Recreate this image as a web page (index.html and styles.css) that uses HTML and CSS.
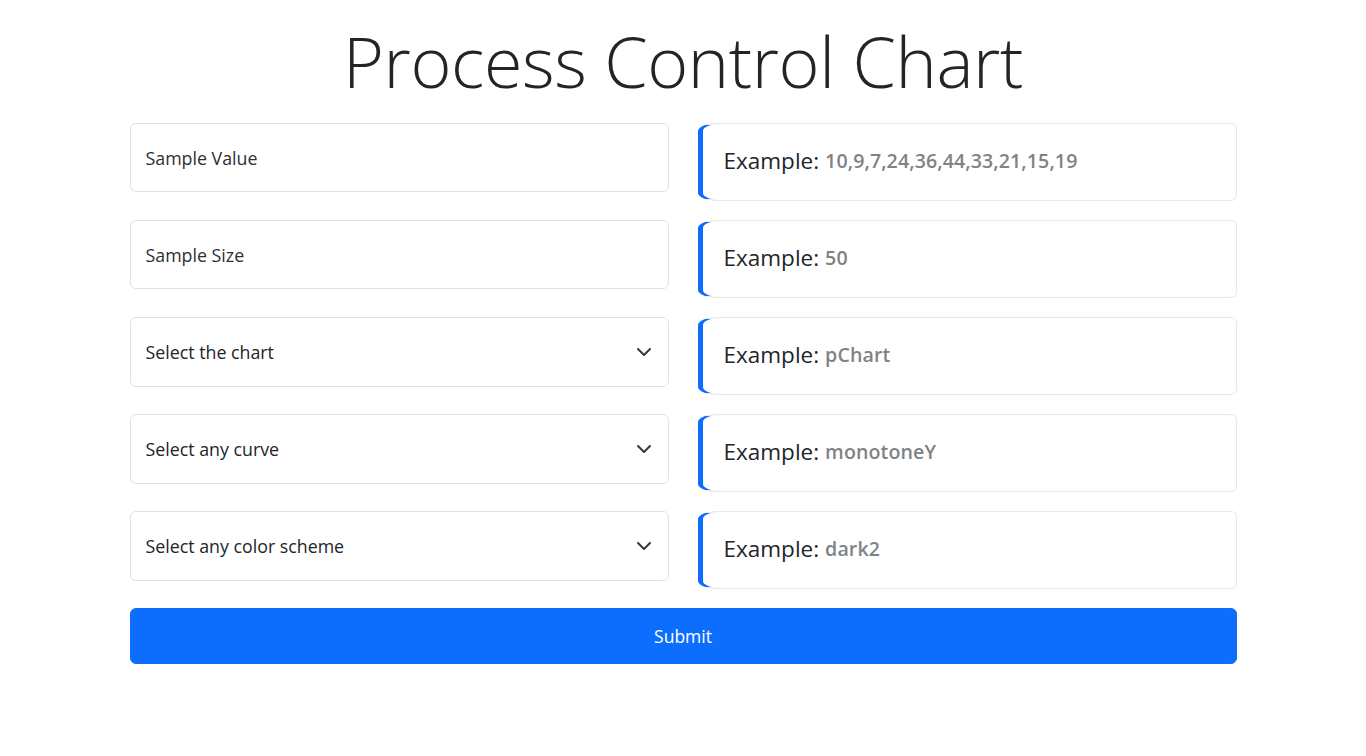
FILE: index.html
```html
<!DOCTYPE html>
<html lang="en">
<head>
<meta charset="utf-8">
<title>Process Control Chart</title>
<link rel="stylesheet" href="styles.css">
</head>
<body>
<main class="page">
  <h1 class="title">Process Control Chart</h1>
  <form class="form">
    <div class="row">
      <input class="field" type="text" placeholder="Sample Value">
      <div class="hint"><span class="hint-label">Example:</span> <span class="hint-value">10,9,7,24,36,44,33,21,15,19</span></div>
    </div>
    <div class="row">
      <input class="field" type="text" placeholder="Sample Size">
      <div class="hint"><span class="hint-label">Example:</span> <span class="hint-value">50</span></div>
    </div>
    <div class="row">
      <div class="select-wrap">
        <select class="field select"><option>Select the chart</option></select>
        <svg class="chevron" viewBox="0 0 16 16" width="16" height="16"><path d="m2 5 6 6 6-6" fill="none" stroke="#343a40" stroke-width="2" stroke-linecap="round" stroke-linejoin="round"/></svg>
      </div>
      <div class="hint"><span class="hint-label">Example:</span> <span class="hint-value">pChart</span></div>
    </div>
    <div class="row">
      <div class="select-wrap">
        <select class="field select"><option>Select any curve</option></select>
        <svg class="chevron" viewBox="0 0 16 16" width="16" height="16"><path d="m2 5 6 6 6-6" fill="none" stroke="#343a40" stroke-width="2" stroke-linecap="round" stroke-linejoin="round"/></svg>
      </div>
      <div class="hint"><span class="hint-label">Example:</span> <span class="hint-value">monotoneY</span></div>
    </div>
    <div class="row">
      <div class="select-wrap">
        <select class="field select"><option>Select any color scheme</option></select>
        <svg class="chevron" viewBox="0 0 16 16" width="16" height="16"><path d="m2 5 6 6 6-6" fill="none" stroke="#343a40" stroke-width="2" stroke-linecap="round" stroke-linejoin="round"/></svg>
      </div>
      <div class="hint"><span class="hint-label">Example:</span> <span class="hint-value">dark2</span></div>
    </div>
    <button class="submit" type="button">Submit</button>
  </form>
</main>
</body>
</html>
```
FILE: styles.css
```css
* { box-sizing: border-box; }
html, body { margin: 0; padding: 0; background: #fff; }
body {
  font-family: "Open Sans", "Noto Sans", "Liberation Sans", sans-serif;
  color: #212529;
}
.page {
  width: 1107px;
  margin: 0 auto;
  padding-top: 18px;
}
.title {
  margin: 0 0 18px;
  text-align: center;
  font-weight: 300;
  font-size: 70px;
  line-height: 87px;
  letter-spacing: -0.4px;
  color: #212529;
}
.form {
  display: flex;
  flex-direction: column;
  gap: 19px;
}
.row {
  display: grid;
  grid-template-columns: 539px 539px;
  column-gap: 29px;
  align-items: start;
}
.field {
  display: block;
  width: 100%;
  height: 69px;
  margin: 0;
  padding: 0 15px;
  border: 1px solid #dee2e6;
  border-radius: 6px;
  background: #fff;
  font-family: inherit;
  font-size: 17.8px;
  color: #212529;
  outline: none;
}
.field::placeholder { color: #2b3035; opacity: 1; }
.select-wrap { position: relative; }
.select {
  height: 70px;
  appearance: none;
  -webkit-appearance: none;
  padding-right: 48px;
}
.chevron {
  position: absolute;
  right: 17px;
  top: 27px;
  pointer-events: none;
}
.hint {
  height: 78px;
  display: flex;
  align-items: center;
  padding: 0 0 4px 21px;
  border: 1px solid #e6e7e9;
  border-left: 5px solid #0d6efd;
  border-radius: 22px 6px 6px 22px / 8px 6px 6px 8px;
  background: #fff;
}
.hint-label {
  font-size: 22.5px;
  font-weight: 400;
  color: #212529;
  margin-right: 6px;
}
.hint-value {
  font-size: 19.6px;
  font-weight: 600;
  letter-spacing: 0.1px;
  color: #808386;
}
.submit {
  display: block;
  width: 100%;
  height: 56px;
  border: 1px solid #0d6efd;
  border-radius: 6px;
  background: #0d6efd;
  color: #fff;
  font-family: inherit;
  font-size: 17.5px;
  cursor: pointer;
}
```
